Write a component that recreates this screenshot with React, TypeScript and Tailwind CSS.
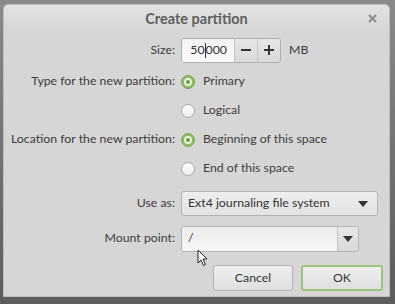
const font = { fontFamily: 'Lato, "Noto Sans", sans-serif' }

function Radio({ checked, label }: { checked?: boolean; label: string }) {
  return (
    <div className="flex items-center gap-[8px] h-[29px]">
      {checked ? (
        <span className="w-[14px] h-[14px] rounded-full border border-[#7fa25a] bg-[#8fbc64] flex items-center justify-center">
          <span className="w-[8px] h-[8px] rounded-full bg-[#e9f3de] flex items-center justify-center">
            <span className="w-[4px] h-[4px] rounded-full bg-[#6f9b47]" />
          </span>
        </span>
      ) : (
        <span className="w-[14px] h-[14px] rounded-full border border-[#a9a9a9] bg-gradient-to-b from-[#ffffff] to-[#ececec]" />
      )}
      <span className="text-[#3c3c3c]">{label}</span>
    </div>
  )
}

function Caret() {
  return (
    <svg width="10" height="6" viewBox="0 0 10 6">
      <path d="M0 0 L10 0 L5 6 Z" fill="#333" />
    </svg>
  )
}

export default function App() {
  return (
    <div
      className="w-[395px] h-[304px] bg-gradient-to-b from-[#8a8a8a] to-[#5c5c5c] pt-[4px] pl-[3px] pr-[5px] pb-[7px] text-[12.3px] whitespace-nowrap"
      style={font}
    >
      <div className="w-full h-full bg-[#d6d6d6] rounded-t-[5px] border border-[#bdbdbd] flex flex-col">
        <div className="h-[26px] flex items-center justify-center relative bg-gradient-to-b from-[#e2e2e2] to-[#d6d6d6] rounded-t-[5px]">
          <span className="font-bold text-[14.5px] text-[#5e5e5e] pt-[1px]">Create partition</span>
          <svg className="absolute right-[12px] top-[9px]" width="9" height="9" viewBox="0 0 9 9">
            <path d="M1 1 L8 8 M8 1 L1 8" stroke="#8a8a8a" strokeWidth="2" />
          </svg>
        </div>
        <div className="grid grid-cols-[171px_1fr] gap-x-[6px] pt-[2px] text-[#3c3c3c]">
          <div className="h-[34px] flex items-center justify-end">Size:</div>
          <div className="h-[34px] flex items-center gap-[8px]">
            <div className="flex h-[25px] w-[100px] border border-[#b0b0b0] rounded-[3px] overflow-hidden">
              <div className="flex-1 bg-gradient-to-b from-[#f2f2f2] to-[#fafafa] flex items-center justify-end pr-[7px] text-[#333]">
                50<span className="w-[1px] h-[15px] bg-[#333] inline-block" />000
              </div>
              <div className="w-[23px] border-l border-[#c4c4c4] bg-gradient-to-b from-[#e6e6e6] to-[#d9d9d9] flex items-center justify-center">
                <svg width="10" height="10" viewBox="0 0 10 10"><path d="M0 5 H10" stroke="#333" strokeWidth="2" /></svg>
              </div>
              <div className="w-[23px] border-l border-[#c4c4c4] bg-gradient-to-b from-[#e6e6e6] to-[#d9d9d9] flex items-center justify-center">
                <svg width="10" height="10" viewBox="0 0 10 10"><path d="M0 5 H10 M5 0 V10" stroke="#333" strokeWidth="2" /></svg>
              </div>
            </div>
            <span>MB</span>
          </div>

          <div className="h-[29px] flex items-center justify-end">Type for the new partition:</div>
          <Radio checked label="Primary" />
          <div />
          <Radio label="Logical" />

          <div className="h-[29px] flex items-center justify-end">Location for the new partition:</div>
          <Radio checked label="Beginning of this space" />
          <div />
          <Radio label="End of this space" />

          <div className="h-[35px] mt-[3px] flex items-center justify-end">Use as:</div>
          <div className="h-[35px] mt-[3px] flex items-center">
            <div className="w-[197px] h-[25px] border border-[#b3b3b3] rounded-[3px] bg-gradient-to-b from-[#eeeeee] to-[#e2e2e2] flex items-center justify-between pl-[6px] pr-[9px] text-[#333]">
              <span>Ext4 journaling file system</span>
              <Caret />
            </div>
          </div>

          <div className="h-[35px] flex items-center justify-end">Mount point:</div>
          <div className="h-[35px] flex items-center">
            <div className="w-[178px] h-[26px] border border-[#b3b3b3] rounded-[3px] flex overflow-hidden">
              <div className="flex-1 bg-gradient-to-b from-[#ececec] to-[#f6f6f6] flex items-center pl-[6px] text-[#333]">/</div>
              <div className="w-[21px] border-l border-[#c4c4c4] bg-gradient-to-b from-[#e6e6e6] to-[#dadada] flex items-center justify-center">
                <Caret />
              </div>
            </div>
          </div>
        </div>
        <div className="flex justify-end gap-[8px] pr-[6px] mt-[9px] relative">
          <svg className="absolute left-[193px] top-[-16px]" width="12" height="18" viewBox="0 0 12 18">
            <path d="M1 1 L1 14 L4 11 L6.5 16.5 L8.5 15.5 L6 10 L10 10 Z" fill="#fff" stroke="#222" strokeWidth="1" strokeLinejoin="round" />
          </svg>
          <button className="w-[80px] h-[26px] border border-[#b3b3b3] rounded-[3px] bg-gradient-to-b from-[#eeeeee] to-[#e0e0e0] text-[#333]">Cancel</button>
          <button className="w-[82px] h-[26px] border-2 border-[#9ec27a] rounded-[3px] bg-gradient-to-b from-[#eeeeee] to-[#e0e0e0] text-[#333]">OK</button>
        </div>
      </div>
    </div>
  )
}
